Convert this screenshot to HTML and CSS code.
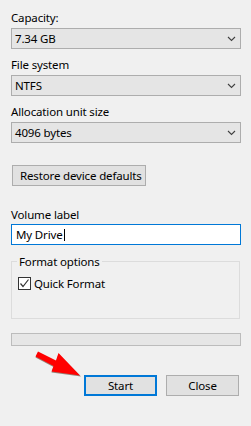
FILE: index.html
```html
<!DOCTYPE html>
<html lang="en">
<head>
    <meta charset="UTF-8">
    <title>Format</title>
    <link rel="stylesheet" href="styles.css">
</head>
<body>
    <div class="dialog">
        <div class="field">
            <div class="label">Capacity:</div>
            <div class="combo">
                <span>7.34 GB</span>
                <svg class="chevron" width="9" height="6" viewBox="0 0 9 6"><polyline points="1,1 4.5,4.5 8,1"/></svg>
            </div>
        </div>
        <div class="field">
            <div class="label">File system</div>
            <div class="combo">
                <span>NTFS</span>
                <svg class="chevron" width="9" height="6" viewBox="0 0 9 6"><polyline points="1,1 4.5,4.5 8,1"/></svg>
            </div>
        </div>
        <div class="field">
            <div class="label">Allocation unit size</div>
            <div class="combo">
                <span>4096 bytes</span>
                <svg class="chevron" width="9" height="6" viewBox="0 0 9 6"><polyline points="1,1 4.5,4.5 8,1"/></svg>
            </div>
        </div>

        <button class="btn restore">Restore device defaults</button>

        <div class="field volume">
            <div class="label">Volume label</div>
            <div class="textbox">My Drive<span class="caret"></span></div>
        </div>

        <fieldset class="options">
            <legend>Format options</legend>
            <div class="check">
                <span class="box">
                    <svg width="11" height="11" viewBox="0 0 11 11"><polyline points="1.5,5.5 4,8.5 9.5,1.5"/></svg>
                </span>
                Quick Format
            </div>
        </fieldset>

        <div class="progress"></div>

        <div class="actions">
            <svg class="arrow" width="50" height="32" viewBox="33 348 50 32">
                <polygon class="shadow" points="38,352.5 56,361.5 58.5,354 81,376.5 51.5,372.5 53.5,367 35.5,357.5"/>
                <polygon class="head" points="38,351.5 56,360.5 58.5,353 80,375.5 51.5,371.5 53.5,366 35.5,356.5"/>
            </svg>
            <button class="btn primary">Start</button>
            <button class="btn">Close</button>
        </div>
    </div>
</body>
</html>
```

FILE: styles.css
```css
body {
    margin: 0;
    background-color: #f0f0f0;
    font-family: 'Noto Sans', 'Open Sans', sans-serif;
    font-size: 11.5px;
    letter-spacing: -0.15px;
    color: #000;
}

.dialog {
    padding: 10px 10px 0 11px;
}

.field {
    margin-top: 8px;
}

.field:first-child {
    margin-top: 0;
}

.label {
    line-height: 15px;
    margin-bottom: 3px;
}

.combo {
    height: 21px;
    box-sizing: border-box;
    border: 1px solid #adadad;
    background-color: #e5e5e5;
    display: flex;
    align-items: center;
    justify-content: space-between;
    padding: 0 4px 0 3px;
}

.chevron polyline {
    fill: none;
    stroke: #404040;
    stroke-width: 1.1;
}

.btn {
    font-family: inherit;
    font-size: inherit;
    letter-spacing: inherit;
    white-space: nowrap;
    color: #000;
    height: 21px;
    box-sizing: border-box;
    border: 1px solid #adadad;
    background-color: #e1e1e1;
    padding: 0;
    border-radius: 0;
    line-height: 17px;
}

.restore {
    display: block;
    width: 134px;
    margin: 22px 0 0 1px;
    text-align: left;
    padding-left: 7px;
}

.volume {
    margin-top: 21px;
}

.volume .label {
    margin-bottom: 2px;
}

.textbox {
    height: 21px;
    box-sizing: border-box;
    border: 1px solid #0078d7;
    background-color: #fff;
    padding: 0 4px;
    line-height: 19px;
    display: flex;
    align-items: center;
}

.caret {
    display: inline-block;
    width: 1px;
    height: 12px;
    background-color: #000;
    margin-left: 1px;
}

.options {
    margin: 9px 1px 0 0;
    padding: 7px 5px 27px 5px;
    border: 1px solid #dcdcdc;
}

.options legend {
    padding: 0 2px;
    line-height: 15px;
}

.check {
    display: flex;
    align-items: center;
    gap: 3px;
    margin-left: 1px;
    line-height: 15px;
}

.box {
    width: 13px;
    height: 13px;
    box-sizing: border-box;
    border: 1px solid #333;
    background-color: #fff;
    display: flex;
    align-items: center;
    justify-content: center;
}

.box polyline {
    fill: none;
    stroke: #333;
    stroke-width: 1.2;
}

.progress {
    margin-top: 14px;
    height: 13px;
    box-sizing: border-box;
    border: 1px solid #bcbcbc;
    background-color: #e6e6e6;
}

.actions {
    position: relative;
    margin-top: 29px;
    padding-right: 2px;
    display: flex;
    justify-content: flex-end;
    gap: 9px;
}

.actions .btn {
    width: 73px;
}

.actions .primary {
    border: 2px solid #0078d7;
    line-height: 15px;
}

.arrow {
    position: absolute;
    left: 22px;
    top: -27px;
}

.arrow .head {
    fill: #ff0000;
}

.arrow .shadow {
    fill: #5a3a2a;
    opacity: 0.6;
}
```
